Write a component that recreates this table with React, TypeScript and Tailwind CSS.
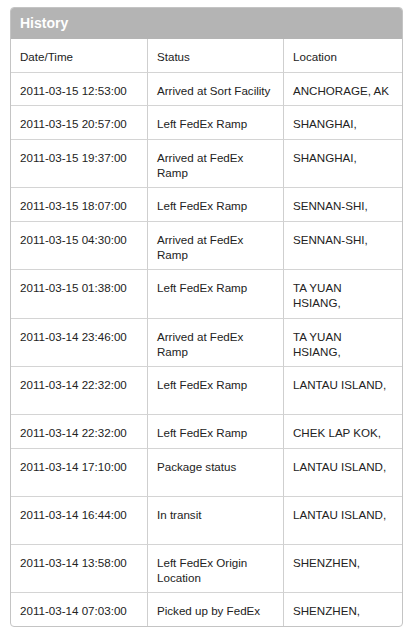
interface HistoryRow {
  date: string;
  status: string;
  location: string;
  tall?: boolean;
}

const rows: HistoryRow[] = [
  { date: '2011-03-15 12:53:00', status: 'Arrived at Sort Facility', location: 'ANCHORAGE, AK' },
  { date: '2011-03-15 20:57:00', status: 'Left FedEx Ramp', location: 'SHANGHAI,' },
  { date: '2011-03-15 19:37:00', status: 'Arrived at FedEx Ramp', location: 'SHANGHAI,' },
  { date: '2011-03-15 18:07:00', status: 'Left FedEx Ramp', location: 'SENNAN-SHI,' },
  { date: '2011-03-15 04:30:00', status: 'Arrived at FedEx Ramp', location: 'SENNAN-SHI,' },
  { date: '2011-03-15 01:38:00', status: 'Left FedEx Ramp', location: 'TA YUAN\nHSIANG,' },
  { date: '2011-03-14 23:46:00', status: 'Arrived at FedEx Ramp', location: 'TA YUAN\nHSIANG,' },
  { date: '2011-03-14 22:32:00', status: 'Left FedEx Ramp', location: 'LANTAU ISLAND,', tall: true },
  { date: '2011-03-14 22:32:00', status: 'Left FedEx Ramp', location: 'CHEK LAP KOK,' },
  { date: '2011-03-14 17:10:00', status: 'Package status', location: 'LANTAU ISLAND,', tall: true },
  { date: '2011-03-14 16:44:00', status: 'In transit', location: 'LANTAU ISLAND,', tall: true },
  { date: '2011-03-14 13:58:00', status: 'Left FedEx Origin Location', location: 'SHENZHEN,' },
  { date: '2011-03-14 07:03:00', status: 'Picked up by FedEx', location: 'SHENZHEN,' },
];

const cell = 'pl-[9px] pt-[10px] pb-[7.5px] align-top';

export default function App() {
  return (
    <div className="min-h-screen bg-white pt-[7px] pl-[10px] font-['Liberation_Sans',Arial,sans-serif]">
      <div className="w-[393px] overflow-hidden rounded-[4px] border border-[#c4c4c4] bg-white">
        <div className="flex h-[31px] items-center bg-[#b4b4b4] px-[9px]">
          <h2 className="text-[14px] font-bold text-white">History</h2>
        </div>
        <table className="w-full table-fixed border-separate border-spacing-0 text-left text-[11.6px] leading-[15px] text-[#222]">
          <colgroup>
            <col className="w-[136px]" />
            <col className="w-[136px]" />
            <col />
          </colgroup>
          <thead>
            <tr>
              <th className={`${cell} pr-[4px] font-normal`}>Date/Time</th>
              <th className={`${cell} pr-[9px] border-l border-[#cfcfcf] font-normal`}>Status</th>
              <th className={`${cell} pr-[6px] border-l border-[#cfcfcf] font-normal`}>Location</th>
            </tr>
          </thead>
          <tbody>
            {rows.map((row, i) => (
              <tr key={i} className={row.tall ? 'h-[48px]' : ''}>
                <td className={`${cell} pr-[4px] border-t border-[#d4d4d4]`}>{row.date}</td>
                <td className={`${cell} pr-[9px] border-t border-l border-t-[#d4d4d4] border-l-[#cfcfcf]`}>{row.status}</td>
                <td className={`${cell} pr-[6px] whitespace-pre-line border-t border-l border-t-[#d4d4d4] border-l-[#cfcfcf]`}>
                  {row.location}
                </td>
              </tr>
            ))}
          </tbody>
        </table>
      </div>
    </div>
  );
}
